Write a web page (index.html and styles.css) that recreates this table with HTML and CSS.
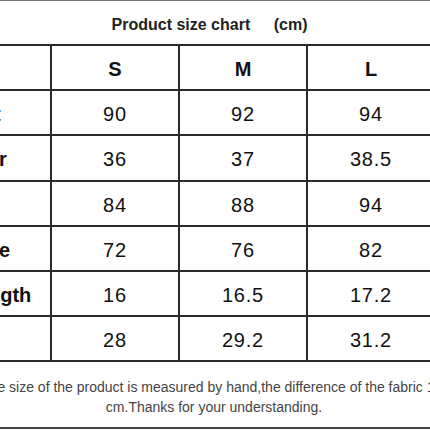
FILE: index.html
```html
<!DOCTYPE html>
<html lang="en">
<head>
  <meta charset="UTF-8">
  <meta name="viewport" content="width=device-width, initial-scale=1.0">
  <title>Product size chart</title>
  <link rel="stylesheet" href="styles.css">
</head>
<body>
  <div class="chart">
    <div class="chart-title">Product size chart <span class="unit">(cm)</span></div>

    <div class="size-grid">
      <div class="cell label">Size</div>
      <div class="cell head">S</div>
      <div class="cell head">M</div>
      <div class="cell head">L</div>

      <div class="cell label">Bust</div>
      <div class="cell">90</div>
      <div class="cell">92</div>
      <div class="cell">94</div>

      <div class="cell label">Collar</div>
      <div class="cell">36</div>
      <div class="cell">37</div>
      <div class="cell">38.5</div>

      <div class="cell label">Hip</div>
      <div class="cell">84</div>
      <div class="cell">88</div>
      <div class="cell">94</div>

      <div class="cell label">Sleeve</div>
      <div class="cell">72</div>
      <div class="cell">76</div>
      <div class="cell">82</div>

      <div class="cell label">Cuff length</div>
      <div class="cell">16</div>
      <div class="cell">16.5</div>
      <div class="cell">17.2</div>

      <div class="cell label">Arm</div>
      <div class="cell">28</div>
      <div class="cell">29.2</div>
      <div class="cell">31.2</div>
    </div>

    <p class="chart-note">
      The size of the product is measured by hand,the difference of the fabric 1-3<br>
      cm.Thanks for your understanding.
    </p>
  </div>
</body>
</html>
```

FILE: styles.css
```css
:root {
  --line-color: #2b2b2b;
  --text-color: #111;
  --note-color: #444;
}

html, body {
  overflow: hidden;
}

body {
  margin: 0;
  background: #fff;
  font-family: 'Liberation Sans', Arial, sans-serif;
  color: var(--text-color);
}

/* the chart is wider than the window, only its middle part shows */
.chart {
  margin-left: -90px;
  width: 606px;
}

.chart-title {
  height: 38px;
  padding: 5px 7px 0 0;
  border-top: 1px solid #777;
  text-align: center;
  line-height: 38px;
  font-size: 16px;
  font-weight: bold;
  color: #222;
}

.unit {
  margin-left: 19px;
}

.size-grid {
  display: grid;
  grid-template-columns: 140px 126px 126px 126px;
  grid-auto-rows: 43.2px;
  gap: 2px;
  padding: 2px 0;
  background-color: var(--line-color);
}

.cell {
  display: flex;
  align-items: center;
  justify-content: center;
  padding-top: 4px;
  background-color: #fff;
  font-size: 20px;
  letter-spacing: 0.8px;
  white-space: nowrap;
}

.head, .label {
  font-weight: bold;
  letter-spacing: 0;
}

.label {
  padding-right: 3px;
}

.chart-note {
  margin: 0;
  padding: 15px 0 10px 2px;
  border-bottom: 2px solid #444;
  text-align: center;
  font-size: 14px;
  line-height: 20px;
  color: var(--note-color);
  white-space: nowrap;
}
```
